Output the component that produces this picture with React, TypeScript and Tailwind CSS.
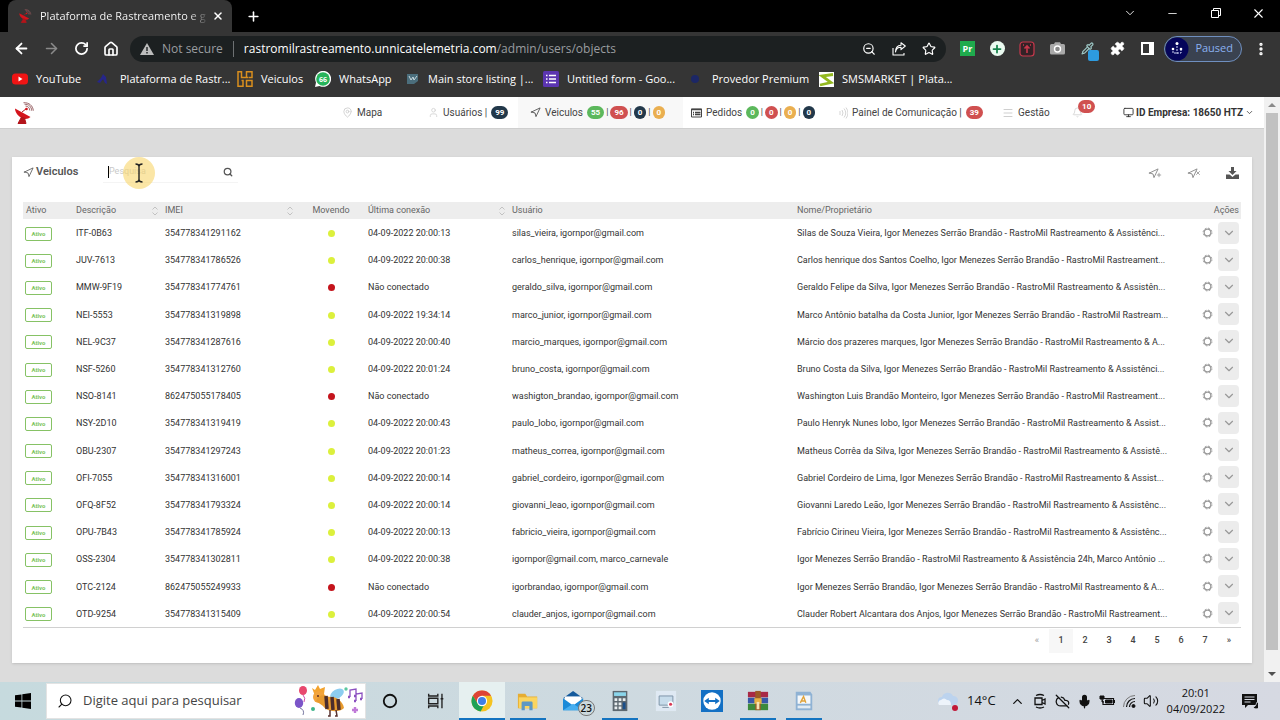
import React, { useState } from "react";
import {
  ArrowLeft, ArrowRight, Bell, ChevronDown, ChevronUp, CloudOff, Copy, House, MapPin,
  Menu, Mic, Minus, Monitor, MoreVertical, Navigation, Pipette, Plus, Puzzle, RotateCw,
  Search, Star, User, Volume2, X, ZoomOut,
} from "lucide-react";

const OWNER = "Igor Menezes Serrão Brandão - RastroMil";

const vehicles = [
  { plate: "ITF-0B63", imei: "354778341291162", last: "04-09-2022 20:00:13", user: "silas_vieira, igornpor@gmail.com", name: `Silas de Souza Vieira, ${OWNER} Rastreamento & Assistênci...` },
  { plate: "JUV-7613", imei: "354778341786526", last: "04-09-2022 20:00:38", user: "carlos_henrique, igornpor@gmail.com", name: `Carlos henrique dos Santos Coelho, ${OWNER} Rastreament...` },
  { plate: "MMW-9F19", imei: "354778341774761", last: "Não conectado", user: "geraldo_silva, igornpor@gmail.com", name: `Geraldo Felipe da Silva, ${OWNER} Rastreamento & Assistên...` },
  { plate: "NEI-5553", imei: "354778341319898", last: "04-09-2022 19:34:14", user: "marco_junior, igornpor@gmail.com", name: `Marco Antônio batalha da Costa Junior, ${OWNER} Rastream...` },
  { plate: "NEL-9C37", imei: "354778341287616", last: "04-09-2022 20:00:40", user: "marcio_marques, igornpor@gmail.com", name: `Márcio dos prazeres marques, ${OWNER} Rastreamento & A...` },
  { plate: "NSF-5260", imei: "354778341312760", last: "04-09-2022 20:01:24", user: "bruno_costa, igornpor@gmail.com", name: `Bruno Costa da Silva, ${OWNER} Rastreamento & Assistênci...` },
  { plate: "NSO-8141", imei: "862475055178405", last: "Não conectado", user: "washigton_brandao, igornpor@gmail.com", name: `Washington Luis Brandão Monteiro, ${OWNER} Rastreament...` },
  { plate: "NSY-2D10", imei: "354778341319419", last: "04-09-2022 20:00:43", user: "paulo_lobo, igornpor@gmail.com", name: `Paulo Henryk Nunes lobo, ${OWNER} Rastreamento & Assist...` },
  { plate: "OBU-2307", imei: "354778341297243", last: "04-09-2022 20:01:23", user: "matheus_correa, igornpor@gmail.com", name: `Matheus Corrêa da Silva, ${OWNER} Rastreamento & Assistê...` },
  { plate: "OFI-7055", imei: "354778341316001", last: "04-09-2022 20:00:14", user: "gabriel_cordeiro, igornpor@gmail.com", name: `Gabriel Cordeiro de Lima, ${OWNER} Rastreamento & Assist...` },
  { plate: "OFQ-8F52", imei: "354778341793324", last: "04-09-2022 20:00:14", user: "giovanni_leao, igornpor@gmail.com", name: `Giovanni Laredo Leão, ${OWNER} Rastreamento & Assistênc...` },
  { plate: "OPU-7B43", imei: "354778341785924", last: "04-09-2022 20:00:13", user: "fabricio_vieira, igornpor@gmail.com", name: `Fabrício Cirineu Vieira, ${OWNER} Rastreamento & Assistênc...` },
  { plate: "OSS-2304", imei: "354778341302811", last: "04-09-2022 20:00:38", user: "igornpor@gmail.com, marco_carnevale", name: `${OWNER} Rastreamento & Assistência 24h, Marco Antônio ...` },
  { plate: "OTC-2124", imei: "862475055249933", last: "Não conectado", user: "igorbrandao, igornpor@gmail.com", name: `Igor Menezes Serrão Brandão, ${OWNER} Rastreamento & A...` },
  { plate: "OTD-9254", imei: "354778341315409", last: "04-09-2022 20:00:54", user: "clauder_anjos, igornpor@gmail.com", name: `Clauder Robert Alcantara dos Anjos, ${OWNER} Rastreament...` },
];

const badgeColors = {
  green: "bg-[#5cb85c]",
  red: "bg-[#d05050]",
  navy: "bg-[#22384a]",
  orange: "bg-[#eaaf50]",
};

function Badge({ color, children }: { color: keyof typeof badgeColors; children: React.ReactNode }) {
  return (
    <span className={`inline-flex h-[13px] items-center rounded-full px-1 text-[8px] font-bold text-white ${badgeColors[color]}`}>
      {children}
    </span>
  );
}

function Badges({ items }: { items: [keyof typeof badgeColors, string][] }) {
  return (
    <span className="flex items-center gap-0.5">
      {items.map(([color, value], i) => (
        <React.Fragment key={color}>
          {i > 0 && <span className="text-[9px]">|</span>}
          <Badge color={color}>{value}</Badge>
        </React.Fragment>
      ))}
    </span>
  );
}

function Dish({ className }: { className?: string }) {
  return (
    <svg className={className} viewBox="0 0 20 22" fill="none">
      <path d="M1 6.5 16.5 15c-2.500 2.300-6.500 2.500-9.500.6C3.500 13.400 1 10 1 6.500Z" fill="#d4141c" />
      <path d="m8 10 4.500-3.500M7.500 15 4 21.500h8L10.500 16Z" fill="#b3141a" stroke="#b3141a" />
      <circle cx="12.500" cy="7" r="1.300" fill="#d4141c" />
      <path d="M11.500 4c2.500.1 4.200 1.900 4.300 4.500M10.500 2.200c4.200-.1 7 2.500 7.200 6.500M9.500.7c5.500-.3 9.500 3 9.800 8" stroke="#8e5558" strokeWidth=".9" />
    </svg>
  );
}

function Sorter() {
  return (
    <svg className="h-2.5 w-2" viewBox="0 0 8 10" fill="none" stroke="#c2c2c2">
      <path d="m1.500 3.500 2.500-2.500 2.500 2.500M1.500 6.500 4 9l2.500-2.500" />
    </svg>
  );
}

function TabStrip() {
  return (
    <div className="flex h-8 items-stretch bg-black text-white">
      <div className="ml-2 flex w-56 items-center rounded-t-lg bg-[#353535] pr-2 pl-2.5">
        <Dish className="h-3.5 w-3.5" />
        <span className="ml-2 bg-gradient-to-r from-white from-90% to-[#555] bg-clip-text text-[11px] whitespace-nowrap text-transparent">
          Plataforma de Rastreamento e g
        </span>
        <button className="ml-auto" aria-label="Close tab"><X size={12} strokeWidth={3} /></button>
      </div>
      <button className="ml-2.5 px-1" aria-label="New tab"><Plus size={15} strokeWidth={2.5} /></button>
      <div className="ml-auto flex items-center pb-1.5">
        <button className="flex w-[43px] justify-center" aria-label="Search tabs"><ChevronDown size={14} strokeWidth={1.5} /></button>
        <button className="flex w-[43px] justify-center" aria-label="Minimize"><Minus size={13} strokeWidth={1.5} /></button>
        <button className="flex w-[43px] justify-center" aria-label="Restore">
          <svg className="h-2.5 w-2.5" viewBox="0 0 10 10" fill="none" stroke="currentColor"><path d="M.5 2.500h7v7h-7ZM2.500 2.500v-2h7v7h-2" /></svg>
        </button>
        <button className="flex w-[43px] justify-center" aria-label="Close"><X size={15} strokeWidth={1.8} /></button>
      </div>
    </div>
  );
}

const toolButton = "flex w-[30px] shrink-0 items-center justify-center";

function Toolbar() {
  return (
    <div className="flex h-[33px] items-center bg-[#353535] pl-1.5 text-white">
      <button className={toolButton} aria-label="Back"><ArrowLeft size={17} strokeWidth={2.5} /></button>
      <button className={`${toolButton} text-[#8a8a8a]`} aria-label="Forward"><ArrowRight size={17} strokeWidth={2.2} /></button>
      <button className={toolButton} aria-label="Reload"><RotateCw size={15} strokeWidth={2.8} /></button>
      <button className={toolButton} aria-label="Home"><House size={16} strokeWidth={2.5} /></button>
      <div className="ml-1 flex h-[26px] flex-1 items-center rounded-full bg-[#1c2021] pr-0.5 pl-2.5 text-[12px]">
        <svg className="h-3.5 w-3.5" viewBox="0 0 14 14">
          <path d="M7 1 14 13H0Z" fill="#bdbdbd" />
          <path d="M6.300 5h1.400v4H6.300zM6.300 10h1.400v1.400H6.300z" fill="#1c2021" />
        </svg>
        <span className="ml-2 text-[#9a9da0]">Not secure</span>
        <span className="mx-2.5 h-4 w-px bg-[#6d7173]" />
        <span className="flex-1 whitespace-nowrap">
          rastromilrastreamento.unnicatelemetria.com<span className="text-[#9a9da0]">/admin/users/objects</span>
        </span>
        <button className={toolButton} aria-label="Zoom"><ZoomOut size={14} /></button>
        <button className={toolButton} aria-label="Share">
          <svg className="h-3.5 w-3.5" viewBox="0 0 14 14" fill="none" stroke="currentColor" strokeWidth="1.100">
            <path d="M1 6v7h11v-2M3.500 10C4 7 6 5.200 9 5.200V7.700L13.300 4 9 .8V3.200C5.500 3.400 3.500 6 3.500 10Z" strokeLinejoin="round" />
          </svg>
        </button>
        <button className={toolButton} aria-label="Bookmark"><Star size={14} /></button>
      </div>
      <div className="ml-1.5 flex items-center">
        <button className={toolButton} aria-label="Pr">
          <span className="flex h-[15px] w-[15px] items-center justify-center bg-[#1fab4d] text-[9px] font-bold">Pr</span>
        </button>
        <button className={toolButton} aria-label="Add">
          <span className="flex h-[15px] w-[15px] items-center justify-center rounded-full bg-[#eafaf0] text-[#14804a]"><Plus size={12} strokeWidth={3.5} /></span>
        </button>
        <button className={toolButton} aria-label="Upload">
          <svg className="h-4 w-4" viewBox="0 0 16 16" fill="none" stroke="#c8384c">
            <rect x="1" y="1" width="14" height="14" rx="3" fill="#332226" strokeWidth="1.200" />
            <path d="M8 12V5.500M5.500 7.500 8 5l2.500 2.500M4 4h1M11 4h1" strokeWidth="1.600" />
          </svg>
        </button>
        <button className={toolButton} aria-label="Camera">
          <svg className="h-[15px] w-[15px]" viewBox="0 0 15 15">
            <path d="M1.500 3H4l1-1.800h5L11 3h2.500Q15 3 15 4.500v7.500q0 1.500-1.500 1.500h-12Q0 13.500 0 12V4.500Q0 3 1.500 3Z" fill="#a9a9a9" />
            <circle cx="7.500" cy="8" r="3" fill="#888" stroke="#fff" strokeWidth="1.400" />
          </svg>
        </button>
        <button className={`${toolButton} relative`} aria-label="Color picker">
          <Pipette className="text-[#9cc6c4]" size={13} strokeWidth={2.2} />
          <span className="absolute top-2 left-4 h-[11px] w-[11px] rounded-xs bg-[#2d9be0]" />
        </button>
        <button className={toolButton} aria-label="Extensions"><Puzzle size={15} fill="currentColor" strokeWidth={1} /></button>
        <button className={toolButton} aria-label="Side panel">
          <span className="block h-[13px] w-[13px] border-2 border-r-[5px] border-white" />
        </button>
      </div>
      <button className="ml-0.5 flex h-[26px] items-center gap-1.5 rounded-full border border-[#6f8fbf] bg-[#3a4250] pr-2 text-[11px] text-[#8ab1f0]">
        <svg className="h-6 w-6" viewBox="0 0 24 24">
          <circle cx="12" cy="12" r="11.500" fill="#05055a" />
          <path d="M12 6v9M8 11v5h8v-5M12 15v3" stroke="#cfd6f5" fill="none" strokeDasharray="2 1" />
          <circle cx="12" cy="6.500" r="1.500" fill="#fff" /><circle cx="8" cy="12" r="1.300" fill="#fff" /><circle cx="16" cy="12" r="1.300" fill="#fff" />
        </svg>
        Paused
      </button>
      <button className="flex w-[38px] justify-center" aria-label="Menu"><MoreVertical size={16} strokeWidth={3} /></button>
    </div>
  );
}

function BookmarksBar() {
  const link = "flex items-center gap-2 whitespace-nowrap";
  return (
    <div className="flex h-8 items-center bg-[#353535] pb-1 pl-3 text-[11px] text-white">
      <a href="#" className={`${link} w-[84px]`}>
        <svg className="h-4 w-4" viewBox="0 0 16 16"><rect y="2.500" width="16" height="11" rx="3.500" fill="#f01414" /><path d="M6.500 5.500v5l4-2.500Z" fill="#fff" /></svg>
        YouTube
      </a>
      <a href="#" className={`${link} w-[141px]`}>
        <svg className="h-3.5 w-4" viewBox="0 0 16 14"><path d="M1 10 5 6 7 2l3 3 1 7-2-1-2-4-3 4Z" fill="#26268a" /></svg>
        Plataforma de Rastr...
      </a>
      <a href="#" className={`${link} w-[78px]`}>
        <svg className="h-4 w-4" viewBox="0 0 16 16" fill="none" stroke="#d98f1e" strokeWidth="1.500"><path d="M1 0v15.200h5V9.500H4.500M1 .8h3.500v5.700h7M15 16V9.500H9.500v5.700H15M9.500 6.500V.8H15v5.700h-3" /></svg>
        Veiculos
      </a>
      <a href="#" className={`${link} w-[91px]`}>
        <svg className="h-4 w-4" viewBox="0 0 16 16"><path d="M0 16l1-4.500A8 8 0 1 1 4.500 15Z" fill="#fff" /><circle cx="8" cy="8" r="6.800" fill="#27b45b" /><text x="8" y="10.500" fontSize="7" fontWeight="700" textAnchor="middle" fill="#fff">66</text></svg>
        WhatsApp
      </a>
      <a href="#" className={`${link} w-[137px]`}>
        <svg className="h-3.5 w-3.5" viewBox="0 0 14 14"><path d="M1 2h11v7l-4 3H1Z" fill="#4b6e7c" /><path d="m3 4 2 4 2-3 1 3 3-4" stroke="#c8d8de" fill="none" /></svg>
        Main store listing |...
      </a>
      <a href="#" className={`${link} w-[145px]`}>
        <svg className="h-4 w-4" viewBox="0 0 16 16"><rect width="16" height="16" rx="1.500" fill="#5b35b0" /><path d="M3 4.500h1.500M3 8h1.500M3 11.500h1.500M6 4.500h7M6 8h7M6 11.500h7" stroke="#fff" strokeWidth="1.600" /></svg>
        Untitled form - Goo...
      </a>
      <a href="#" className={`${link} w-[131px]`}>
        <svg className="h-4 w-4" viewBox="0 0 16 16"><circle cx="7" cy="8" r="4" fill="#1c2766" /></svg>
        Provedor Premium
      </a>
      <a href="#" className={link}>
        <svg className="h-[15px] w-[15px]" viewBox="0 0 15 15"><path d="M0 0h15v15H0z" fill="#fff" /><path d="M14 2.500 3 4l9 6.500L1 13" stroke="#93b81f" strokeWidth="2.800" fill="none" /></svg>
        SMSMARKET | Plata...
      </a>
    </div>
  );
}

function NavBar() {
  const item = "flex items-center gap-1 whitespace-nowrap";
  return (
    <header className="flex h-8 shrink-0 items-stretch border-b border-[#cfcfcf] bg-white pr-2.5 pl-3.5 text-[10px] text-[#444]">
      <a href="#" className="mr-auto flex items-center" aria-label="RastroMil"><Dish className="h-[22px] w-5" /></a>
      <a href="#" className={`${item} w-[86px]`}><MapPin className="text-[#cfcfcf]" size={11} />Mapa</a>
      <a href="#" className={`${item} w-[90px]`}>
        <User className="text-[#d5d5d5]" size={11} />
        <span>Usuários |</span>
        <Badge color="navy">99</Badge>
      </a>
      <a href="#" className={`${item} w-[165px] bg-[#f8f8f8] pl-3`}>
        <Navigation size={11} strokeWidth={1.8} />
        Veiculos
        <Badges items={[["green", "55"], ["red", "96"], ["navy", "0"], ["orange", "0"]]} />
      </a>
      <a href="#" className={`${item} w-[155px] pl-2`}>
        <svg className="h-2.5 w-[11px]" viewBox="0 0 11 10" fill="none" stroke="#444"><path d="M.5 1h10v8H.500Z" /><path d="M0 1.500h11M2 4.500h1M4 4.500h5.500M2 6.500h1M4 6.500h5.500" strokeWidth="1.300" /></svg>
        Pedidos
        <Badges items={[["green", "0"], ["red", "0"], ["orange", "0"], ["navy", "0"]]} />
      </a>
      <a href="#" className={`${item} w-[164px]`}>
        <svg className="h-3 w-2.5" viewBox="0 0 10 12" fill="none" stroke="#d5d5d5"><path d="M2 8V4M4 3q2 3 0 6M6 1.500q3.500 4.500 0 9M8 .5q4 5.500 0 11" /></svg>
        <span>Painel de Comunicação |</span>
        <Badge color="red">39</Badge>
      </a>
      <a href="#" className={`${item} w-[70px]`}><Menu className="text-[#cfcfcf]" size={12} />Gestão</a>
      <button className="relative flex w-[51px] items-center" aria-label="Notificações">
        <Bell className="text-[#d5d5d5]" size={11} />
        <span className="absolute top-[3px] left-1.5 flex"><Badge color="red">10</Badge></span>
      </button>
      <button className="flex items-center gap-0.5 font-bold whitespace-nowrap text-[#333]">
        <Monitor size={11} />
        ID Empresa: 18650 HTZ
        <ChevronDown size={9} />
      </button>
    </header>
  );
}

function VehiclesPanel() {
  const [search, setSearch] = useState("");
  const [page, setPage] = useState(1);
  const head = "px-[3px] text-left font-normal";
  const cell = "px-[3px] pt-0.5";

  return (
    <section className="flex min-h-0 flex-1 flex-col bg-white px-[11px] shadow-sm">
      <div className="flex h-[45px] shrink-0 items-start pt-1">
        <h1 className="mt-[3px] flex w-20 items-center gap-0.5 text-[11px] font-semibold text-[#555]"><Navigation size={11} strokeWidth={1.8} />Veiculos</h1>
        <div className="relative flex h-[22px] w-[135px] items-center border-b border-[#f4f4f4] px-[5px]">
          <span className="h-3 w-px bg-black" />
          <input
            type="text"
            aria-label="Pesquisa"
            placeholder="Pesquisa"
            value={search}
            onChange={e => setSearch(e.target.value)}
            className="w-0 flex-1 text-[9px] text-[#444] outline-none placeholder:text-[#c9c9c9]"
          />
          <button aria-label="Buscar"><Search className="text-[#555]" size={10} strokeWidth={3} /></button>
          {/* Mouse pointer */}
          <span className="pointer-events-none absolute top-[-4px] left-5 flex h-8 w-8 items-center justify-center rounded-full bg-[#f8d56b]/60">
            <svg className="h-5 w-2" viewBox="0 0 8 20" fill="none" stroke="#222" strokeWidth="1.400"><path d="M.500 1Q4 1 4 3.500V16.500Q4 19 .500 19M7.500 1Q4 1 4 3.500M4 16.500Q4 19 7.500 19" /></svg>
          </span>
        </div>
        <div className="mt-1.5 ml-auto flex items-center gap-7 pr-0.5 text-[#888]">
          <button className="relative" aria-label="Adicionar veículo"><Navigation size={11} /><Plus className="absolute top-1 left-2" size={6} strokeWidth={3} /></button>
          <button className="relative" aria-label="Remover veículo"><Navigation size={11} /><X className="absolute top-0.5 left-2" size={6} strokeWidth={3} /></button>
          <button aria-label="Exportar">
            <svg className="h-3 w-[13px]" viewBox="0 0 13 12" fill="#555"><path d="M5 0h3v4h2.500L6.500 8 2.500 4H5ZM0 7.500h3.500l3 2.500 3-2.500H13V12H0Z" /></svg>
          </button>
        </div>
      </div>
      <div className="min-h-0 flex-1 border-b border-[#d0d0d0]">
        <table className="h-full w-full table-fixed border-collapse text-[9px] leading-[11px] whitespace-nowrap text-[#333]">
          <colgroup>
            <col className="w-[50px]" />
            <col className="w-[89px]" />
            <col className="w-[135px]" />
            <col className="w-[68px]" />
            <col className="w-[144px]" />
            <col className="w-[285px]" />
            <col />
            <col className="w-[60px]" />
          </colgroup>
          <thead>
            <tr className="h-[17px] bg-[#ededed] text-[#666]">
              <th className={head}>Ativo</th>
              <th className={head}><span className="flex items-center justify-between">Descrição<Sorter /></span></th>
              <th className={head}><span className="flex items-center justify-between">IMEI<Sorter /></span></th>
              <th className="text-center font-normal">Movendo</th>
              <th className={head}><span className="flex items-center justify-between">Última conexão<Sorter /></span></th>
              <th className={head}>Usuário</th>
              <th className={head}>Nome/Proprietário</th>
              <th className="pr-0.5 text-right font-normal">Ações</th>
            </tr>
          </thead>
          <tbody>
            {vehicles.map(v => (
              <tr key={v.imei}>
                <td className="px-0.5 pt-0.5">
                  <span className="flex h-3.5 w-[27px] items-center justify-center rounded-xs border border-[#86c265] text-[6px] font-bold text-[#7cc45c]">Ativo</span>
                </td>
                <td className={cell}>{v.plate}</td>
                <td className={cell}>{v.imei}</td>
                <td className="pt-0.5">
                  <span className={`mx-auto block h-[7px] w-[7px] rounded-full ${v.last === "Não conectado" ? "bg-[#c4141c]" : "bg-[#dcf03c]"}`} />
                </td>
                <td className={cell}>{v.last}</td>
                <td className={cell}>{v.user}</td>
                <td className={cell}>{v.name}</td>
                <td className="pr-0.5">
                  <span className="flex items-center justify-end gap-[5px]">
                    <button aria-label={`Configurar ${v.plate}`}>
                      <svg className="h-[11px] w-[11px]" viewBox="0 0 11 11" fill="none" stroke="#999"><circle cx="5.500" cy="5.500" r="3.300" strokeWidth="1.200" /><circle cx="5.500" cy="5.500" r="4.400" strokeWidth="1" strokeDasharray="1.800 1.656" /></svg>
                    </button>
                    <button className="flex h-[22px] w-[21px] items-center justify-center rounded bg-[#ececec] text-[#999]" aria-label={`Ações ${v.plate}`}>
                      <ChevronDown size={14} />
                    </button>
                  </span>
                </td>
              </tr>
            ))}
          </tbody>
        </table>
      </div>
      <nav className="flex h-[35px] shrink-0 justify-end pt-px text-[9px] font-medium text-[#444]" aria-label="Páginas">
        <button className="h-6 w-6 text-[#aaa]">«</button>
        {[1, 2, 3, 4, 5, 6, 7].map(n => (
          <button key={n} className={`h-6 w-6 ${n === page ? "bg-[#f7f7f7]" : ""}`} onClick={() => setPage(n)}>{n}</button>
        ))}
        <button className="h-6 w-6">»</button>
      </nav>
    </section>
  );
}

function PartyBee() {
  return (
    <svg className="h-8 w-[72px]" viewBox="0 0 72 32" fill="none">
      <ellipse cx="10" cy="5.500" rx="4" ry="4.500" fill="#e8486e" /><path d="M10 10q3 3 1 7" stroke="#b08" strokeWidth=".7" />
      <ellipse cx="6" cy="18" rx="4.200" ry="5" fill="#7b55c8" /><path d="M7 23q5 2 3 7" stroke="#558" strokeWidth=".8" />
      <path d="m19 3 3 2 3-5 2 4 5-2-1 7-9 2Z" fill="#f3a32e" />
      <ellipse cx="44" cy="9" rx="7.500" ry="4.500" fill="#8dcdf0" transform="rotate(-30 44 9)" />
      <circle cx="26" cy="12" r="6" fill="#f2a33a" />
      <path d="M23 16c2-6 8-7 13-4 6-1 14 4 15 11-5 5-17 4-21-2Z" fill="#e79a2e" />
      <path d="m33 11 1 13M39 12l1 13M45 14l1 11" stroke="#4b2d2c" strokeWidth="3.500" />
      <path d="M37 25v6h-2M43 25l1 6h-2" stroke="#5a3330" strokeWidth="1.500" />
      <circle cx="25" cy="11" r="1" fill="#5a2a20" />
      <circle cx="20" cy="24" r="2" fill="#3eb489" /><circle cx="53" cy="4" r="1.700" fill="#5cc8a0" />
      <path d="M57 12V5l6-1v7M63 16V9l6-1v6" stroke="#8b50c0" strokeWidth="1.300" /><path d="M55 12h2M61 11h2M61 16h2M67 14h2" stroke="#8b50c0" strokeWidth="2.500" />
      <path d="M62 22v6M59 25h6" stroke="#c07ad8" strokeWidth="2.400" />
    </svg>
  );
}

const appIcons = [
  { name: "Cortana", bar: "", art: <circle cx="12" cy="12" r="6.800" fill="none" stroke="#111" strokeWidth="2" /> },
  { name: "Visão de tarefas", bar: "", art: <path d="M4 4v2.500h10V4M4 20v-2.500h10V20M4 9h10v6H4ZM18.500 4v16M17 9.500h3" fill="none" stroke="#222" strokeWidth="1.500" /> },
  {
    name: "Google Chrome", bar: "w-full",
    art: <>
      <circle cx="12" cy="12" r="11.500" fill="#f5c321" />
      <path d="M12 .5a11.500 11.500 0 0 1 10 5.800H12L7.400 14.600 2 6.300A11.500 11.500 0 0 1 12 .5Z" fill="#dd4436" />
      <path d="M2 6.300 7.300 14.700A5.500 5.500 0 0 0 14 17l-3.500 6.400A11.500 11.500 0 0 1 2 6.300Z" fill="#1ea155" />
      <circle cx="12" cy="12" r="5.600" fill="#fff" /><circle cx="12" cy="12" r="4.400" fill="#3f7fe8" />
    </>,
  },
  { name: "Explorador", bar: "w-9", art: <><path d="M1 4h8l2 3h11v13H1Z" fill="#e6ad32" /><path d="M2 8h20v12H2Z" fill="#fbd55f" /><path d="M5 22v-8q0-1.500 1.500-1.500h9Q17 12.500 17 14v8h-3.500v-4.500h-5V22Z" fill="#5d98c4" /></> },
  { name: "E-mail", bar: "", art: <><path d="m0 9 11-8 11 8Z" fill="#155a9c" /><path d="M2 7h18v9H2Z" fill="#fff" /><path d="m0 9 11 8 11-8v13H0Z" fill="#1b8ad8" /><path d="m0 22 11-7 11 7Z" fill="#46aef0" /></> },
  { name: "Calculadora", bar: "w-9", art: <><path d="M4 1h16v22H4Z" fill="#5d6870" /><path d="M5.500 2.500h13v4h-13Z" fill="#8ad5ea" /><path d="M6 9h3v3H6zM10.500 9h3v3h-3zM15 9h3v3h-3zM6 13.500h3v3H6zM10.500 13.500h3v3h-3zM6 18h3v3H6zM10.500 18h3v3h-3z" fill="#e9eef0" /><path d="M15 13.500h3V21h-3Z" fill="#1a4f8a" /></> },
  { name: "Gravador", bar: "", art: <><path d="M1 1h22v22H1Z" fill="#dfe9f3" /><path d="M4.500 6.500h15v10h-15Z" fill="#c7dceb" stroke="#7a8fa3" /><path d="M8 19h7" stroke="#7a8fa3" /><circle cx="17" cy="15.500" r="3.200" fill="#fff" /><circle cx="17" cy="15.500" r="1.700" fill="#d83a56" /></> },
  { name: "TeamViewer", bar: "", art: <><path d="M0 0h24v24H0Z" fill="#1370c4" /><circle cx="12" cy="12" r="9.500" fill="#fff" /><path d="m3.500 12 5-3.500v2.300h7V8.500l5 3.500-5 3.500v-2.300h-7v2.300Z" fill="#1370c4" /></> },
  { name: "WinRAR", bar: "w-9", art: <><path d="M1 2h22v6H1Z" fill="#a82945" /><path d="M1 8.500h22v6H1Z" fill="#3858a8" /><path d="M1 15h22v7H1Z" fill="#3c8a3b" /><path d="M9 1h6v21H9Z" fill="#9c5a26" /><path d="M8 9h8v6H8Z" fill="#e8b242" /><path d="M10.500 13h3v8h-3Z" fill="#f4e3b5" /></> },
  { name: "Editor", bar: "w-9", art: <><path d="M3 2h16l2 3v17H3Z" fill="#8fb2d4" /><path d="M5 6h14v9H5Z" fill="#f5f8fb" /><path d="m8 14 3.500-7 2.500 7M9 12h4" stroke="#e0a23a" strokeWidth="1.500" fill="none" /><path d="M5 17h14v3H5Z" fill="#e2ebf3" /></> },
];

function TaskBar() {
  return (
    <footer className="flex h-[38px] shrink-0 items-stretch bg-gradient-to-r from-[#c6dade] to-[#d6d9e2] text-[#111]">
      <button className="flex w-[46px] items-center justify-center" aria-label="Iniciar">
        <svg className="h-4 w-4" viewBox="0 0 16 16"><path d="m0 2.300 6.500-.9v6.200H0ZM7.300 1.300 16 0v7.600H7.300ZM0 8.400h6.500v6.200L0 13.700ZM7.300 8.400H16V16l-8.700-1.300Z" /></svg>
      </button>
      <label className="my-px mr-px flex w-80 items-center gap-2.5 border border-[#e3e3e3] bg-white pl-2.5">
        <Search className="-scale-x-100" size={16} strokeWidth={1.6} />
        <input type="text" aria-label="Pesquisar" placeholder="Digite aqui para pesquisar" className="w-0 flex-1 text-[13px] outline-none placeholder:text-[#444]" />
        <PartyBee />
      </label>
      {appIcons.map(app => (
        <button key={app.name} className={`relative flex w-[46px] items-center justify-center ${app.bar === "w-full" ? "bg-[#e6f0f0]" : ""}`} aria-label={app.name}>
          <svg className="h-[22px] w-[22px]" viewBox="0 0 24 24">{app.art}</svg>
          {app.name === "E-mail" && (
            <span className="absolute right-0.5 bottom-1 flex h-4 min-w-4 items-center justify-center rounded-full border border-[#777] bg-[#ccd9dd] px-0.5 text-[10px] font-semibold">23</span>
          )}
          {app.bar && <span className={`absolute bottom-0 h-0.5 bg-[#1474c0] ${app.bar}`} />}
        </button>
      ))}
      <div className="ml-auto flex items-center pr-[22px]">
        <svg className="mr-2 h-5 w-[22px]" viewBox="0 0 22 20"><path d="M5 14a4 4 0 0 1 0-8 6 6 0 0 1 11-1 4.500 4.500 0 0 1 1 9Z" fill="#bcd3ee" /><path d="M2 14a3 3 0 0 1 2-5q3-3 6 0 4 0 4 5Z" fill="#edf3fa" /><circle cx="18" cy="17" r="3" fill="#c01838" /></svg>
        <span className="mr-3.5 text-[13px]">14°C</span>
        <div className="flex items-center gap-[7px]">
          <ChevronUp size={15} />
          <svg className="h-4 w-4" viewBox="0 0 16 16" fill="none" stroke="currentColor" strokeWidth="1.300">
            <path d="M3 5h7v6.500H3ZM10 7.500 13 6v5l-3-1.500M4 2.500q4-2 8 0M4 14q4 2 8 0" />
          </svg>
          <CloudOff size={15} />
          <Mic size={15} fill="currentColor" />
          <svg className="h-4 w-4" viewBox="0 0 16 16" fill="none" stroke="currentColor">
            <path d="M5 5.500h9.500v6H4V9M15.500 7v3" strokeWidth="1.200" /><path d="M6.500 7h6.500v3H6.500ZM1 3v3h4V3M2 2v2M4 2v2M3 6v3h2" fill="currentColor" />
          </svg>
          <svg className="h-3.5 w-3.5" viewBox="0 0 14 14" fill="none" stroke="currentColor">
            <path d="M1.500 13A11.500 11.500 0 0 1 13 1.500" stroke="#777" /><path d="M4.500 13A8.500 8.500 0 0 1 13 4.500M7.500 13A5.500 5.500 0 0 1 13 7.500" strokeWidth="1.200" /><circle cx="11.500" cy="12" r="1.500" fill="currentColor" />
          </svg>
          <Volume2 size={16} strokeWidth={1.6} />
        </div>
        <div className="mr-3 ml-2 flex flex-col items-center text-[11px] leading-4"><span>20:01</span><span>04/09/2022</span></div>
        <svg className="ml-1 h-4 w-[17px]" viewBox="0 0 17 16">
          <path d="M1 1h15v11H7l-3 3v-3H1Z" fill="#111" /><path d="M3.500 4h10M3.500 6.500h10M3.500 9h6" stroke="#d6d9e2" /><path d="M16 9a3.500 3.500 0 1 1-4 5q3 0 4-5Z" fill="#111" stroke="#d6d9e2" strokeWidth=".8" />
        </svg>
      </div>
    </footer>
  );
}

export default function App() {
  return (
    <div className="flex h-screen flex-col overflow-hidden font-['Open_Sans','Noto_Sans',sans-serif]">
      <TabStrip />
      <Toolbar />
      <BookmarksBar />
      <div className="flex min-h-0 flex-1 bg-[#dcdcdc] font-[Roboto,sans-serif]">
        <div className="flex min-w-0 flex-1 flex-col">
          <NavBar />
          <main className="flex min-h-0 flex-1 flex-col px-3 pt-7 pb-[19px]">
            <VehiclesPanel />
          </main>
        </div>
        {/* Page scrollbar */}
        <div className="flex w-4 flex-col items-center bg-[#f1f1f1]">
          <svg className="h-4 w-2 shrink-0" viewBox="0 0 8 16"><path d="m0 10 4-4 4 4Z" fill="#8a8a8a" /></svg>
          <span className="w-3 flex-1 bg-[#c1c1c1]" />
          <svg className="mt-4 h-4 w-2 shrink-0" viewBox="0 0 8 16"><path d="m0 6 4 4 4-4Z" fill="#505050" /></svg>
        </div>
      </div>
      <TaskBar />
    </div>
  );
}
